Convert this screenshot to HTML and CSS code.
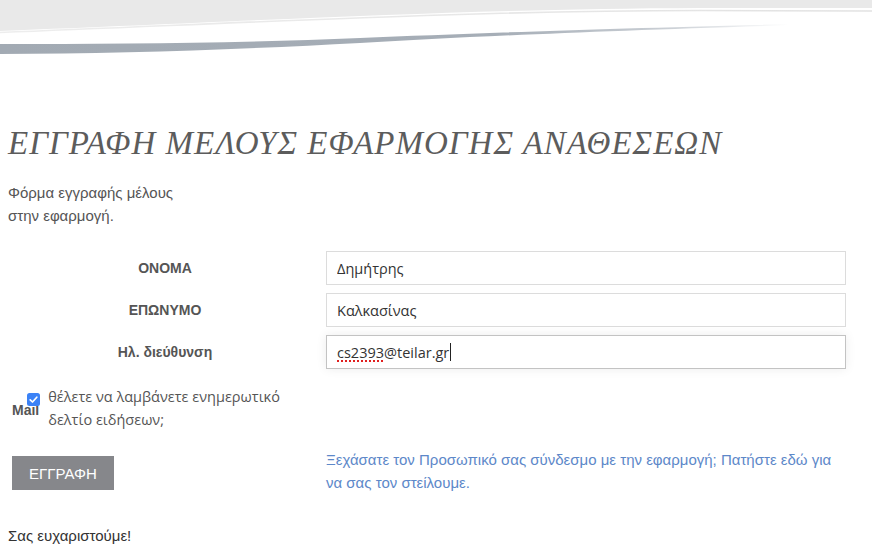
FILE: index.html
```html
<!DOCTYPE html>
<html lang="el">
<head>
<meta charset="utf-8">
<title>Εγγραφή μέλους</title>
<link rel="stylesheet" href="styles.css">
</head>
<body>
<header class="wave">
  <svg width="872" height="60" viewBox="0 0 872 60" preserveAspectRatio="none" aria-hidden="true">
    <defs>
      <linearGradient id="band" x1="0" y1="0" x2="1" y2="0">
        <stop offset="0" stop-color="#a2aab3"/>
        <stop offset="0.6" stop-color="#a6aeb7"/>
        <stop offset="0.8" stop-color="#c9ced4"/>
        <stop offset="0.95" stop-color="#ffffff"/>
      </linearGradient>
      <linearGradient id="thin" x1="0" y1="0" x2="1" y2="0">
        <stop offset="0" stop-color="#ededed"/>
        <stop offset="1" stop-color="#e2e2e2"/>
      </linearGradient>
    </defs>
    <path d="M0 0 H872 V8 L700 8 C470 9 300 19 0 31 Z" fill="#e9e9e9"/>
    <path d="M0 32.5 C300 20.5 470 11 700 10.5 L872 11" fill="none" stroke="url(#thin)" stroke-width="1.6"/>
    <path d="M0 44 C120 44 250 43 360 38 C480 33 620 28 830 23 L830 24 C620 30 480 36 360 43 C250 49 120 54 0 54 Z" fill="url(#band)"/>
  </svg>
</header>
<main class="page">
  <h1 class="title">ΕΓΓΡΑΦΗ ΜΕΛΟΥΣ ΕΦΑΡΜΟΓΗΣ ΑΝΑΘΕΣΕΩΝ</h1>
  <p class="intro">Φόρμα εγγραφής μέλους στην εφαρμογή.</p>
  <form class="form">
    <label class="label" for="fname">ΟΝΟΜΑ</label>
    <input class="field" id="fname" type="text" value="Δημήτρης">
    <label class="label" for="lname">ΕΠΩΝΥΜΟ</label>
    <input class="field" id="lname" type="text" value="Καλκασίνας">
    <label class="label">Ηλ. διεύθυνση</label>
    <div class="field focused"><span class="misspelled">cs2393</span>@teilar.gr<span class="caret"></span></div>
  </form>
  <div class="mailrow">
    <span class="mail">Mail</span>
    <span class="check"><svg width="13" height="13" viewBox="0 0 13 13"><rect x="0" y="0" width="13" height="13" rx="2.5" fill="#3b82f6"/><path d="M3.2 6.8 L5.5 9 L9.8 4.2" fill="none" stroke="#fff" stroke-width="1.7" stroke-linecap="round" stroke-linejoin="round"/></svg></span>
    <span class="checktext">θέλετε να λαμβάνετε ενημερωτικό δελτίο ειδήσεων;</span>
  </div>
  <div class="actions">
    <div class="btncell"><button class="btn" type="button">ΕΓΓΡΑΦΗ</button></div>
    <a class="link" href="#">Ξεχάσατε τον Προσωπικό σας σύνδεσμο με την εφαρμογή; Πατήστε εδώ για να σας τον στείλουμε.</a>
  </div>
  <p class="thanks">Σας ευχαριστούμε!</p>
</main>
</body>
</html>
```
FILE: styles.css
```css
html, body {
  margin: 0;
  padding: 0;
  background: #ffffff;
}
body {
  font-family: "Liberation Sans", Arial, sans-serif;
  color: #555555;
  font-size: 15px;
}
.wave {
  height: 60px;
  overflow: hidden;
}
.wave svg {
  display: block;
}
.page {
  padding: 0 8px;
}
.title {
  margin: 63px 0 0 0;
  font-family: "Liberation Serif", "Times New Roman", serif;
  font-style: italic;
  font-weight: normal;
  font-size: 33px;
  letter-spacing: 1px;
  line-height: 40px;
  color: #5c5c5c;
  white-space: nowrap;
}
.intro {
  margin: 18px 0 0 0;
  width: 190px;
  line-height: 23px;
  color: #555555;
}
.form {
  margin-top: 24px;
  display: grid;
  grid-template-columns: 314px 520px;
  column-gap: 4px;
  row-gap: 8px;
  align-items: center;
}
.label {
  text-align: center;
  font-weight: bold;
  font-size: 14px;
  color: #555555;
}
.field {
  box-sizing: border-box;
  height: 34px;
  width: 520px;
  margin: 0;
  border: 1px solid #dcdcdc;
  padding: 0 10px;
  font-family: "Open Sans", sans-serif;
  font-size: 14.5px;
  color: #333333;
  background: #ffffff;
  outline: none;
}
.focused {
  display: flex;
  align-items: center;
  border-color: #c3c3c3;
  box-shadow: 0 0 10px rgba(0, 0, 0, 0.08);
}
.misspelled {
  text-decoration: underline dotted #e02020;
  text-decoration-thickness: 2px;
  text-underline-offset: 3px;
}
.caret {
  display: inline-block;
  width: 1px;
  height: 18px;
  background: #222222;
  margin-left: 1px;
}
.mailrow {
  margin-top: 22px;
  display: flex;
  align-items: flex-start;
  padding-left: 4px;
}
.mail {
  font-weight: bold;
  font-size: 14px;
  color: #555555;
  padding-top: 11px;
  line-height: 16px;
}
.check {
  margin-left: -12px;
  margin-top: 2px;
  width: 13px;
  height: 13px;
}
.check svg {
  display: block;
}
.checktext {
  margin-left: 8px;
  width: 245px;
  font-family: "Open Sans", sans-serif;
  font-size: 14.5px;
  line-height: 23px;
  color: #555555;
  margin-top: -6px;
}
.actions {
  margin-top: 17px;
  display: grid;
  grid-template-columns: 314px 520px;
  column-gap: 4px;
  align-items: start;
}
.btncell {
  padding: 8px 0 0 4px;
}
.btn {
  display: block;
  width: 102px;
  height: 34px;
  border: 0;
  background: #86878b;
  color: #ffffff;
  font-family: "Liberation Sans", Arial, sans-serif;
  font-size: 15px;
  padding: 0;
}
.link {
  color: #5d88c9;
  text-decoration: none;
  line-height: 23px;
}
.thanks {
  margin: 30px 0 0 0;
  line-height: 23px;
  color: #333333;
}
```
